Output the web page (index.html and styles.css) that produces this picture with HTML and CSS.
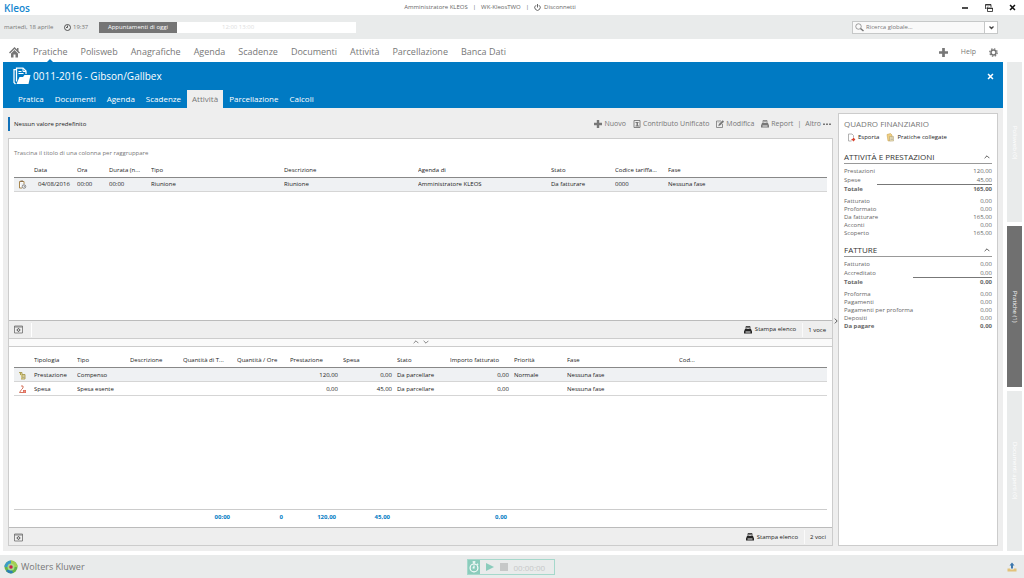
FILE: index.html
```html
<!DOCTYPE html>
<html lang="it">
<head>
<meta charset="utf-8">
<title>Kleos</title>
<link rel="stylesheet" href="styles.css">
</head>
<body>
<svg class="sprite" aria-hidden="true">
  <symbol id="printer" viewBox="0 0 16 16"><path d="M4 6V1h8v5M5 3.500h6" fill="none" stroke="currentColor" stroke-width="1.600"/><path d="M2 6h12l2 5v4H0v-4zM3 11v2h10v-2z" fill="currentColor" fill-rule="evenodd"/></symbol>
  <symbol id="up" viewBox="0 0 10 10"><path d="M1 7l4-4 4 4" fill="none" stroke="currentColor" stroke-width="1.300"/></symbol>
  <symbol id="down" viewBox="0 0 10 10"><path d="M1 3l4 4 4-4" fill="none" stroke="currentColor" stroke-width="1.300"/></symbol>
  <symbol id="cross" viewBox="0 0 10 10"><path d="M1.500 1.500l7 7M8.500 1.500l-7 7" fill="none" stroke="currentColor" stroke-width="2.200"/></symbol>
  <symbol id="plus" viewBox="0 0 10 10"><path d="M5 0v10M0 5h10" stroke="currentColor" stroke-width="3"/></symbol>
  <symbol id="gridset" viewBox="0 0 18 16"><path d="M1 1h16v14H1zM1 3h16" fill="none" stroke="currentColor" stroke-width="1.500"/><circle cx="9" cy="9" r="2.500" fill="none" stroke="currentColor" stroke-width="2"/><path d="M9 5v2M9 11v2M5 9h2M11 9h2" stroke="currentColor" stroke-width="1.500"/></symbol>
</svg>

<header class="titlebar">
  <a class="brand" href="#">Kleos</a>
  <div class="session">
    <span>Amministratore KLEOS</span><span>|</span><span>WK-KleosTWO</span><span>|</span>
    <button class="plain"><svg class="i7" viewBox="0 0 14 14"><path d="M4 2.500a5.500 5.500 0 1 0 6 0M7 0v7" fill="none" stroke="currentColor" stroke-width="2"/></svg>Disconnetti</button>
  </div>
  <div class="window-controls">
    <button class="plain" aria-label="Riduci"><svg class="i8" viewBox="0 0 8 8"><path d="M1 4h6" stroke="currentColor" stroke-width="1.500"/></svg></button>
    <button class="plain" aria-label="Ripristina"><svg class="i8" viewBox="0 0 16 16"><path d="M5 8v7h10V8zM5 9h10M1 10V1h11v5M1 2h11M3 9l3-4" fill="none" stroke="currentColor" stroke-width="1.500"/></svg></button>
    <button class="plain" aria-label="Chiudi"><svg class="i7"><use href="#cross"/></svg></button>
  </div>
</header>

<div class="infobar">
  <span class="date">martedì, 18 aprile</span>
  <span class="clock"><svg class="i7" viewBox="0 0 14 14"><circle cx="7" cy="7" r="6" fill="none" stroke="currentColor" stroke-width="1.800"/><path d="M7 3v4H4" fill="none" stroke="currentColor" stroke-width="1.800"/></svg>19:37</span>
  <div class="agenda"><button class="today">Appuntamenti di oggi</button><span class="slot">12:00 13:00</span></div>
  <div class="search">
    <svg class="i9" viewBox="0 0 18 18"><circle cx="7" cy="7" r="5.500" fill="none" stroke="currentColor" stroke-width="1.400"/><path d="M11 11l6 5" stroke="currentColor" stroke-width="3"/></svg>
    <input type="text" aria-label="Ricerca globale" placeholder="Ricerca globale...">
    <button class="plain more" aria-label="Opzioni ricerca"><svg class="i5" viewBox="0 0 10 10"><path d="M1 3l4 4 4-4" fill="none" stroke="currentColor" stroke-width="2.500"/></svg></button>
  </div>
</div>

<nav class="mainnav">
  <a class="home" href="#" aria-label="Home"><svg viewBox="0 0 22 22"><path d="M11 0L0 11l2 2 9-9 9 9 2-2-3-3V2h-3v3z" fill="currentColor"/><path d="M4 13l7-7 7 7v8h-5v-6H9v6H4z" fill="currentColor"/></svg></a>
  <a class="current" href="#">Pratiche</a><a href="#">Polisweb</a><a href="#">Anagrafiche</a><a href="#">Agenda</a><a href="#">Scadenze</a><a href="#">Documenti</a><a href="#">Attività</a><a href="#">Parcellazione</a><a href="#">Banca Dati</a>
  <div class="tools">
    <button class="plain" aria-label="Aggiungi"><svg class="i9"><use href="#plus"/></svg></button>
    <a class="help" href="#">Help</a>
    <button class="plain" aria-label="Impostazioni"><svg class="i9" viewBox="0 0 18 18"><circle cx="9" cy="9" r="5" fill="none" stroke="currentColor" stroke-width="3"/><circle cx="9" cy="9" r="7.500" fill="none" stroke="currentColor" stroke-width="2.500" stroke-dasharray="3 2.890"/></svg></button>
  </div>
</nav>

<div class="workspace">
  <main class="matter">
    <header class="matter-head">
      <div class="matter-title">
        <svg class="folder" viewBox="0 0 36 36"><path d="M7 5H2v26l3 3M7 29V2h13l6 6v6" fill="none" stroke="currentColor" stroke-width="2.500"/><path d="M20 2v7h6M11 9h6M11 13h10" fill="none" stroke="currentColor" stroke-width="2"/><path d="M7 34l6-14h7l3-4h12l-4 18z" fill="currentColor"/></svg>
        <h1>0011-2016 - Gibson/Gallbex</h1>
        <button class="plain close" aria-label="Chiudi pratica"><svg class="i7"><use href="#cross"/></svg></button>
      </div>
      <nav class="subnav"><a href="#">Pratica</a><a href="#">Documenti</a><a href="#">Agenda</a><a href="#">Scadenze</a><a class="active" href="#">Attività</a><a href="#">Parcellazione</a><a href="#">Calcoli</a></nav>
    </header>

    <div class="content">
      <div class="lists">
        <div class="toolbar">
          <span class="preset">Nessun valore predefinito</span>
          <button class="plain"><svg class="i8"><use href="#plus"/></svg>Nuovo</button>
          <button class="plain"><svg class="i8" viewBox="0 0 16 16"><path d="M2 1h12v14H2z" fill="none" stroke="currentColor" stroke-width="1.800"/><path d="M5 4h6v2H5zM7 6h3v7H7zM5 11h7v2H5z" fill="currentColor"/></svg>Contributo Unificato</button>
          <button class="plain"><svg class="i8" viewBox="0 0 16 16"><path d="M10 2H1v13h12V8" fill="none" stroke="currentColor" stroke-width="1.600"/><path d="M5 12l1-4 7-7 3 2-7 7zM3 5h4" fill="currentColor" stroke="currentColor" stroke-width=".5"/></svg>Modifica</button>
          <button class="plain"><svg class="i8"><use href="#printer"/></svg>Report</button>
          <span class="bar">|</span>
          <button class="plain">Altro <svg class="i8" viewBox="0 0 16 16"><path d="M0 7h4v3H0zM6 7h4v3H6zM12 7h4v3h-4z" fill="currentColor"/></svg></button>
        </div>

        <section class="grid">
          <div class="grid-body">
            <p class="group-hint">Trascina il titolo di una colonna per raggruppare</p>
            <table>
              <colgroup><col class="w20"><col class="w43"><col class="w32"><col class="w42"><col class="w133"><col class="w134"><col class="w133"><col class="w64"><col class="w53"><col></colgroup>
              <thead><tr><th></th><th>Data</th><th>Ora</th><th>Durata (n...</th><th>Tipo</th><th>Descrizione</th><th>Agenda di</th><th>Stato</th><th>Codice tariffa...</th><th>Fase</th></tr></thead>
              <tbody><tr class="selected"><td class="ico"><svg class="i9" viewBox="0 0 18 18"><path d="M3 3h9v5M3 3v13h5" fill="#fff" stroke="#a8874e" stroke-width="2"/><path d="M5 1h5v3H5z" fill="#8b7355"/><circle cx="12" cy="13" r="3.500" fill="#fff" stroke="#666" stroke-width="1.500"/><path d="M12 11v2h2" stroke="#555" fill="none"/></svg></td><td class="day">04/08/2016</td><td>00:00</td><td>00:00</td><td>Riunione</td><td>Riunione</td><td>Amministratore KLEOS</td><td>Da fatturare</td><td>0000</td><td>Nessuna fase</td></tr></tbody>
            </table>
          </div>
          <footer class="grid-foot"><button class="plain gear" aria-label="Configura griglia"><svg class="i9"><use href="#gridset"/></svg></button><span class="rule"></span><button class="plain print"><svg class="i8"><use href="#printer"/></svg>Stampa elenco</button><span class="count">1 voce</span></footer>
        </section>

        <div class="splitter"><button class="plain" aria-label="Espandi sotto"><svg class="i6"><use href="#up"/></svg></button><button class="plain" aria-label="Espandi sopra"><svg class="i6"><use href="#down"/></svg></button></div>

        <section class="grid detail">
          <div class="grid-body">
            <table>
              <colgroup><col class="w20"><col class="w43"><col class="w53"><col class="w53"><col class="w54"><col class="w53"><col class="w53"><col class="w54"><col class="w53"><col class="w64"><col class="w53"><col class="w112"><col></colgroup>
              <thead><tr><th></th><th>Tipologia</th><th>Tipo</th><th>Descrizione</th><th>Quantità di T...</th><th>Quantità / Ore</th><th>Prestazione</th><th>Spesa</th><th>Stato</th><th>Importo fatturato</th><th>Priorità</th><th>Fase</th><th>Cod...</th></tr></thead>
              <tbody>
                <tr class="selected"><td class="ico"><svg class="i9" viewBox="0 0 18 18"><path d="M2 3h6v12M5 3v5M8 7h6v9H6" fill="#f2e6a5" stroke="#a39649" stroke-width="1.700"/><path d="M9 10h4M9 13h4" stroke="#777"/></svg></td><td>Prestazione</td><td>Compenso</td><td></td><td></td><td></td><td class="num">120,00</td><td class="num">0,00</td><td>Da parcellare</td><td class="num">0,00</td><td>Normale</td><td>Nessuna fase</td><td></td></tr>
                <tr><td class="ico"><svg class="i9" viewBox="0 0 18 18"><path d="M6 2h4v4L7 9l-4 6h7" fill="none" stroke="#d0654c" stroke-width="1.800"/><path d="M10 10h6v6h-6z" fill="#dd5b47"/><path d="M11 12h4M11 14h4" stroke="#fff" stroke-width=".8"/></svg></td><td>Spesa</td><td>Spesa esente</td><td></td><td></td><td></td><td class="num">0,00</td><td class="num">45,00</td><td>Da parcellare</td><td class="num">0,00</td><td></td><td>Nessuna fase</td><td></td></tr>
              </tbody>
            </table>
            <table class="totals" aria-label="Totali">
              <colgroup><col class="w20"><col class="w43"><col class="w53"><col class="w53"><col class="w54"><col class="w53"><col class="w53"><col class="w54"><col class="w53"><col class="w64"><col></colgroup>
              <tbody><tr><td></td><td></td><td></td><td></td><td class="num">00:00</td><td class="num">0</td><td class="num">120,00</td><td class="num">45,00</td><td></td><td class="num">0,00</td><td></td></tr></tbody>
            </table>
          </div>
          <footer class="grid-foot"><button class="plain gear" aria-label="Configura griglia"><svg class="i9"><use href="#gridset"/></svg></button><button class="plain print"><svg class="i8"><use href="#printer"/></svg>Stampa elenco</button><span class="count">2 voci</span></footer>
        </section>
      </div>

      <button class="plain collapse" aria-label="Comprimi pannello"><svg class="i6" viewBox="0 0 10 10"><path d="M3 1l4 4-4 4" fill="none" stroke="currentColor" stroke-width="1.600"/></svg></button>

      <aside class="finance">
        <h2>QUADRO FINANZIARIO</h2>
        <div class="actions">
          <button class="plain"><svg class="i9" viewBox="0 0 18 18"><path d="M13 9V5l-3-3H3v14h6" fill="#fff" stroke="#999" stroke-width="1.500"/><path d="M9 13h6M12 10l3 3-3 3" fill="none" stroke="#d8432f" stroke-width="2.500"/></svg>Esporta</button>
          <button class="plain"><svg class="i9" viewBox="0 0 18 18"><path d="M2 3l7-2 3 3v11l-8 1z" fill="#f0cf82" stroke="#c39b47"/><path d="M7 7h8v9H7z" fill="#eee2b9" stroke="#a9986c"/><path d="M9 10h5M9 13h5" stroke="#999"/></svg>Pratiche collegate</button>
        </div>
        <section>
          <h3>ATTIVITÀ E PRESTAZIONI<button class="plain" aria-label="Comprimi attività"><svg class="i6"><use href="#up"/></svg></button></h3>
          <dl>
            <div><dt>Prestazioni</dt><dd>120,00</dd></div>
            <div><dt>Spese</dt><dd class="sum wide">45,00</dd></div>
            <div class="total"><dt>Totale</dt><dd>165,00</dd></div>
            <div><dt>Fatturato</dt><dd>0,00</dd></div>
            <div><dt>Proformato</dt><dd>0,00</dd></div>
            <div><dt>Da fatturare</dt><dd>165,00</dd></div>
            <div><dt>Acconti</dt><dd>0,00</dd></div>
            <div><dt>Scoperto</dt><dd>165,00</dd></div>
          </dl>
        </section>
        <section>
          <h3>FATTURE<button class="plain" aria-label="Comprimi fatture"><svg class="i6"><use href="#up"/></svg></button></h3>
          <dl>
            <div><dt>Fatturato</dt><dd>0,00</dd></div>
            <div><dt>Accreditato</dt><dd class="sum">0,00</dd></div>
            <div class="total"><dt>Totale</dt><dd>0,00</dd></div>
            <div><dt>Proforma</dt><dd>0,00</dd></div>
            <div><dt>Pagamenti</dt><dd>0,00</dd></div>
            <div><dt>Pagamenti per proforma</dt><dd>0,00</dd></div>
            <div><dt>Depositi</dt><dd>0,00</dd></div>
            <div class="due"><dt>Da pagare</dt><dd>0,00</dd></div>
          </dl>
        </section>
      </aside>
    </div>
  </main>

  <nav class="side-tabs"><button>Polisweb (0)</button><button class="open">Pratiche (1)</button><button>Documenti aperti (0)</button></nav>
</div>

<footer class="statusbar">
  <div class="vendor"><svg viewBox="0 0 28 28"><circle cx="14" cy="14" r="13" fill="#63b548"/><path d="M14 1a13 13 0 0 1 13 13h-7a6 6 0 0 0-6-6z" fill="#a4cf53"/><path d="M1 14A13 13 0 0 1 14 1v7a6 6 0 0 0-6 6z" fill="#3b9bc9"/><path d="M4 22a13 13 0 0 0 14 4l-2-6a6 6 0 0 1-7-2z" fill="#2b7fb5"/><circle cx="14" cy="14" r="7" fill="#a9d98a"/><circle cx="14" cy="14" r="3.500" fill="#c9204c"/></svg>Wolters Kluwer</div>
  <div class="timer">
    <button class="stopwatch" aria-label="Timer"><svg viewBox="0 0 26 28"><circle cx="13" cy="16" r="8.500" fill="none" stroke="#fff" stroke-width="2.500"/><path d="M10 3h6M13 3v4M20 7l2 2M13 11v5h-3" fill="none" stroke="#fff" stroke-width="2.500"/></svg></button>
    <button class="plain play" aria-label="Avvia"><svg class="i8" viewBox="0 0 8 8"><path d="M0 0l8 4-8 4z" fill="currentColor"/></svg></button>
    <button class="plain" aria-label="Ferma"><svg class="i8" viewBox="0 0 8 8"><path d="M0 0h8v8H0z" fill="currentColor"/></svg></button>
    <span>00:00:00</span>
  </div>
  <div class="tray"><button class="plain" aria-label="Carica"><svg class="i10" viewBox="0 0 20 20"><path d="M1 13h5l1 2h6l1-2h5v6H1z" fill="#e2c27b"/><path d="M10 1l5 6h-3v6H8V7H5z" fill="#3d78ae"/></svg></button></div>
</footer>
</body>
</html>
```

FILE: styles.css
```css
* { box-sizing: border-box; }
html, body { height: 100%; }
body {
  margin: 0;
  display: flex;
  flex-direction: column;
  background: #fff;
  color: #222;
  font: 6px/9px "Open Sans", "Noto Sans", sans-serif;
}
h1, h2, h3, p, dl, dd { margin: 0; font-weight: 400; }
a { color: inherit; text-decoration: none; }
svg { display: block; flex: none; }
button, input { font: inherit; color: inherit; border: 0; padding: 0; margin: 0; background: none; }
.plain { display: inline-flex; align-items: center; gap: 3px; white-space: nowrap; }
.sprite { position: absolute; width: 0; height: 0; }
.i5 { width: 5px; height: 5px; }
.i6 { width: 6px; height: 6px; }
.i7 { width: 7px; height: 7px; }
.i8 { width: 8px; height: 8px; }
.i9 { width: 9px; height: 9px; }
.i10 { width: 10px; height: 10px; }

.titlebar {
  height: 15px;
  flex: none;
  display: grid;
  grid-template-columns: 1fr auto 1fr;
  align-items: center;
  padding: 0 8px 0 4px;
}
.brand { color: #1587cf; font-size: 10px; line-height: 14px; font-weight: 600; }
.session { display: flex; gap: 5px; color: #666; margin-right: 40px; }
.window-controls { display: flex; justify-content: flex-end; gap: 16px; color: #111; }

.infobar {
  height: 24px;
  flex: none;
  display: flex;
  align-items: center;
  background: #e9ebeb;
  color: #777;
  padding: 0 26px 0 4px;
}
.date { width: 60px; }
.clock { display: flex; align-items: center; gap: 2px; width: 35px; }
.clock svg { color: #444; }
.agenda { display: flex; align-items: center; width: 257px; height: 11px; background: #fff; }
.today { width: 78px; height: 11px; background: #757575; color: #fff; }
.slot { margin-left: 45px; color: #ddd; }
.search {
  margin-left: auto;
  display: flex;
  align-items: center;
  width: 146px;
  height: 13px;
  border: 1px solid #c6c8c8;
  background: #f9f9f9;
  padding-left: 2px;
  gap: 2px;
  color: #777;
}
.search input { flex: 1; min-width: 0; outline: 0; }
.search input::placeholder { color: #777; opacity: 1; }
.search .more { width: 13px; height: 11px; justify-content: center; border-left: 1px solid #c6c8c8; background: #fff; color: #444; }

.mainnav {
  height: 23px;
  flex: none;
  display: flex;
  align-items: center;
  gap: 13px;
  padding: 3px 26px 0 9px;
  color: #777;
  font-size: 9px;
  line-height: 20px;
}
.home svg { width: 11px; height: 11px; }
.current { position: relative; }
.current::after {
  content: "";
  position: absolute;
  left: calc(50% - 3px);
  bottom: 0;
  border: 3px solid transparent;
  border-top: 0;
  border-bottom-color: #007ac3;
}
.tools { margin-left: auto; display: flex; align-items: center; gap: 13px; }
.help { font-size: 7px; }

.workspace { flex: 1; min-height: 0; display: flex; gap: 4px; padding: 0 2px 4px 3px; }
.matter { flex: 1; min-width: 0; display: flex; flex-direction: column; background: #eee; }
.matter-head { flex: none; background: #007ac3; color: #fff; }
.matter-title { display: flex; align-items: center; height: 28px; padding: 0 9px 0 10px; gap: 2px; }
.folder { width: 18px; height: 18px; }
.matter-title h1 { font-size: 10px; line-height: 14px; }
.close { margin-left: auto; }
.subnav { display: flex; gap: 1px; padding-left: 10px; font-size: 8px; line-height: 18px; }
.subnav a { padding: 0 5px; }
.subnav .active { background: #eee; color: #777; }

.content { flex: 1; min-height: 0; display: flex; padding: 5px; }
.lists { flex: 1; min-width: 0; display: flex; flex-direction: column; }
.toolbar { flex: none; display: flex; align-items: center; gap: 7px; height: 25px; padding: 0 2px 4px 0; color: #777; font-size: 7px; }
.toolbar .plain { gap: 2px; }
.preset { margin-right: auto; border-left: 2px solid #1171b9; padding-left: 4px; line-height: 14px; font-size: 6px; color: #222; }
.toolbar .bar { margin: 0 -3px; }

.grid { flex: 1 1 0; min-height: 0; display: flex; flex-direction: column; border: 1px solid #ccc; background: #fff; }
.grid-body { flex: 1; min-height: 0; display: flex; flex-direction: column; padding: 0 5px; }
.group-hint { margin-top: 10px; margin-bottom: 4px; color: #777; }
.detail { border-top: 0; }
.detail .grid-body { padding-top: 6px; }
table { width: 100%; table-layout: fixed; border-collapse: collapse; }
th, td { padding: 0; font-weight: 400; text-align: left; white-space: nowrap; overflow: hidden; }
th { height: 15px; padding-top: 2px; border-bottom: 1px solid #888; }
td { height: 14px; padding-top: 1px; border-bottom: 1px solid #d5d5d5; }
.selected { background: #eff1f3; }
.ico svg { margin-left: 4px; }
.day { padding-left: 4px; }
.num { text-align: right; padding-right: 5px; }
.w20 { width: 20px; }
.w32 { width: 32px; }
.w42 { width: 42px; }
.w43 { width: 43px; }
.w53 { width: 53px; }
.w54 { width: 54px; }
.w64 { width: 64px; }
.w112 { width: 112px; }
.w133 { width: 133px; }
.w134 { width: 134px; }
.totals { margin-top: auto; border-top: 1px solid #ccc; color: #007ac3; }
.totals td { height: 18px; padding-top: 0; padding-bottom: 2px; border: 0; font-weight: 700; }
.totals .num { padding-right: 7px; }
.grid-foot { flex: none; display: flex; align-items: center; height: 18px; background: #eee; border-top: 1px solid #bbb; padding: 1px 6px 0 5px; }
.gear { color: #666; }
.rule { border-left: 1px solid #fff; height: 14px; margin-left: 8px; }
.print { margin-left: auto; }
.count { border-left: 1px solid #fafafa; margin-left: 6px; padding-left: 5px; line-height: 14px; }
.splitter { flex: none; display: flex; justify-content: center; gap: 4px; height: 8px; background: #fafafa; border: 1px solid #ccc; border-top: 0; color: #666; }

.collapse { width: 5px; justify-content: center; align-items: center; color: #555; padding-bottom: 18px; }

.finance { width: 160px; flex: none; background: #fff; border: 1px solid #ccc; padding: 4px 5px; color: #666; overflow: hidden; }
.finance h2 { font-size: 8px; line-height: 11px; color: #777; }
.actions { display: flex; gap: 7px; padding: 4px 0 0 3px; color: #222; }
.actions .plain { gap: 2px; }
.finance h3 { display: flex; justify-content: space-between; align-items: center; font-size: 8px; line-height: 13px; color: #333; border-bottom: 1px solid #999; margin: 8px 0 3px; padding-right: 2px; }
.finance section + section h3 { margin: 6px 0 3px; }
dl div { display: flex; justify-content: space-between; height: 8px; line-height: 8px; }
dl div:nth-child(-n+3) { height: 9px; line-height: 9px; }
dl .total { font-weight: 700; margin-bottom: 3px; }
dl .due { font-weight: 700; }
dd { text-align: right; }
.total dd, .due dd { font-weight: 700; }
.sum { width: 79px; border-bottom: 1px solid #777; }
.sum.wide { width: 115px; }

.side-tabs { width: 15px; flex: none; display: flex; flex-direction: column; gap: 4px; }
.side-tabs button { flex: 1 1 0; background: #e9ebeb; color: #fff; writing-mode: vertical-rl; text-align: center; }
.side-tabs .open { background: #707070; }

.statusbar {
  height: 23px;
  flex: none;
  display: grid;
  grid-template-columns: 1fr auto 1fr;
  align-items: center;
  background: #e9ebeb;
  padding: 1px 7px 0 4px;
}
.vendor { display: flex; align-items: center; gap: 3px; color: #777; font-size: 9px; line-height: 14px; }
.vendor svg { width: 14px; height: 14px; }
.timer { display: flex; align-items: center; gap: 6px; width: 88px; height: 16px; border: 1px solid #a5d8cb; color: #c6c8c8; font-size: 8px; }
.stopwatch { width: 12px; height: 14px; background: #8bccbc; }
.stopwatch svg { width: 12px; height: 14px; }
.play { color: #8bccbc; }
.tray { display: flex; justify-content: flex-end; }
```
